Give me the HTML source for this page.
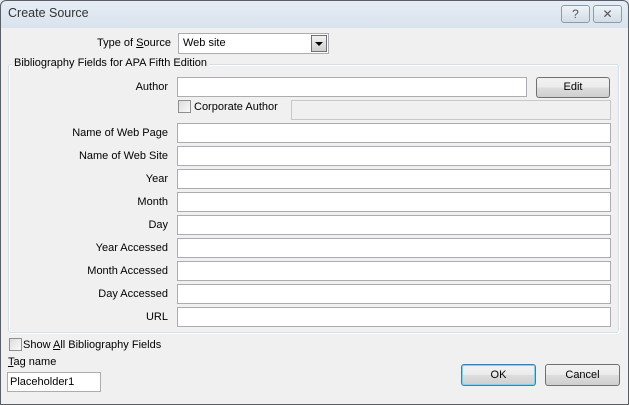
<!DOCTYPE html>
<html><head><meta charset="utf-8"><style>
*{box-sizing:border-box;margin:0;padding:0}
body{width:629px;height:405px;overflow:hidden;background:#fff;font-family:"Liberation Sans",sans-serif;font-size:11px;color:#000}
.win{position:absolute;left:0;top:0;width:629px;height:405px;background:#f0f0f0;overflow:hidden}
.frame{position:absolute;left:0;top:0;width:629px;height:405px;border:1px solid #5a5f66;border-radius:6px 6px 0 0;pointer-events:none}
.title{position:absolute;left:0;top:0;width:629px;height:28px;background:linear-gradient(#e6edf5,#d9e3ee);}
.title span{position:absolute;left:8px;top:6px;font-size:12.5px;color:#333}
.tb{position:absolute;top:5px;height:18px;border:1px solid #8a9bb0;border-radius:3px;background:linear-gradient(#eef3f8,#d3dce6);color:#555;text-align:center;font-size:12px;line-height:16px}
.a{position:absolute}
.lbl{position:absolute;right:461px;text-align:right;white-space:nowrap}
.in{position:absolute;left:177px;width:434px;height:20px;background:#fff;border:1px solid #abadb3}
.btn{position:absolute;height:21px;border:1px solid #707070;border-radius:3px;background:linear-gradient(#f2f2f2 0%,#ebebeb 50%,#dddddd 51%,#cfcfcf 100%);text-align:center;line-height:19px}
.cb{position:absolute;width:13px;height:13px;border:1px solid #8e8f8f;background:linear-gradient(135deg,#dcdcdc,#fafafa)}
</style></head><body>
<div class="win">
<div class="title"><span>Create Source</span>
<div class="tb" style="left:561px;width:29px">?</div>
<div class="tb" style="left:593px;width:29px">✕</div>
</div>
<div class="lbl" style="top:37px;right:458px">Type of <u>S</u>ource</div>
<div class="a" style="left:178px;top:33px;width:151px;height:21px;background:#fff;border:1px solid #abadb3;padding:3px 4px">Web site
<div class="a" style="right:1px;top:1px;width:16px;height:17px;border:1px solid #707070;background:linear-gradient(#f2f2f2,#cfcfcf)"><div class="a" style="left:3px;top:6px;border-left:4px solid transparent;border-right:4px solid transparent;border-top:4px solid #000"></div></div>
</div>
<div class="a" style="left:8px;top:64px;width:611px;height:269px;border:1px solid #d5dfe5;border-radius:3px;box-shadow:inset 1px 1px 0 #fff,1px 1px 0 #fff"></div>
<div class="a" style="left:12px;top:57px;background:#f0f0f0;padding:0 2px">Bibliography Fields for APA Fifth Edition</div>
<div class="lbl" style="top:81px">Author</div>
<div class="in" style="top:77px;width:350px"></div>
<div class="btn" style="left:536px;top:77px;width:74px">Edit</div>
<div class="cb" style="left:178px;top:100px"></div>
<div class="a" style="left:194px;top:101px">Corporate Author</div>
<div class="a" style="left:291px;top:100px;width:320px;height:20px;border:1px solid #c8c8c8;background:#f0f0f0"></div>
<div class="lbl" style="top:127px">Name of Web Page</div><div class="in" style="top:123px"></div>
<div class="lbl" style="top:150px">Name of Web Site</div><div class="in" style="top:146px"></div>
<div class="lbl" style="top:173px">Year</div><div class="in" style="top:169px"></div>
<div class="lbl" style="top:196px">Month</div><div class="in" style="top:192px"></div>
<div class="lbl" style="top:219px">Day</div><div class="in" style="top:215px"></div>
<div class="lbl" style="top:242px">Year Accessed</div><div class="in" style="top:238px"></div>
<div class="lbl" style="top:265px">Month Accessed</div><div class="in" style="top:261px"></div>
<div class="lbl" style="top:288px">Day Accessed</div><div class="in" style="top:284px"></div>
<div class="lbl" style="top:311px">URL</div><div class="in" style="top:307px"></div>
<div class="cb" style="left:9px;top:338px"></div>
<div class="a" style="left:23px;top:339px">Show <u>A</u>ll Bibliography Fields</div>
<div class="a" style="left:8px;top:356px"><u>T</u>ag name</div>
<div class="a" style="left:7px;top:372px;width:94px;height:20px;background:#fff;border:1px solid #abadb3;padding:3px 2px">Placeholder1</div>
<div class="btn" style="left:461px;top:364px;width:75px;height:22px;border-color:#3c7fb1;box-shadow:inset 0 0 0 1px #7fd0f5;line-height:20px">OK</div>
<div class="btn" style="left:545px;top:364px;width:75px;height:22px;line-height:20px">Cancel</div>
<div class="frame"></div>
</div>
</body></html>
